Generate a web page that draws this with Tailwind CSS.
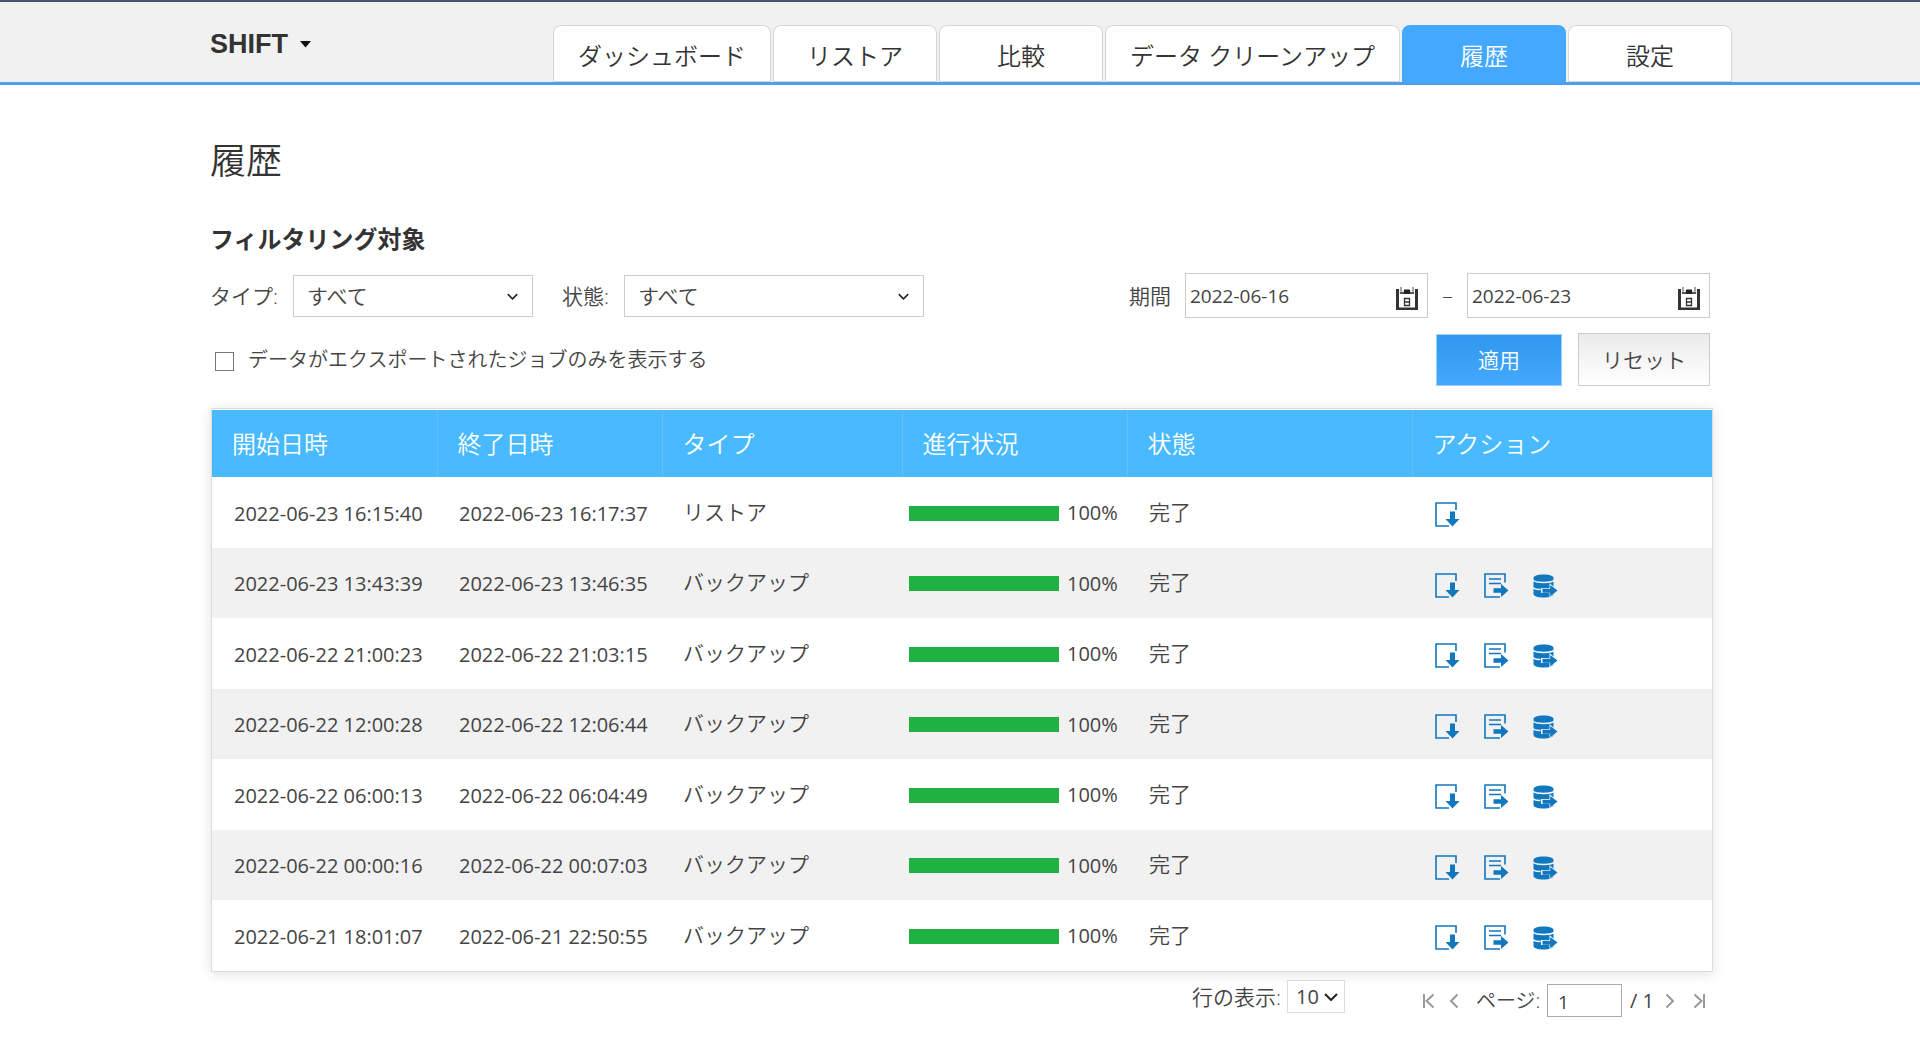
<!DOCTYPE html>
<html lang="ja">
<head>
<meta charset="utf-8">
<title>履歴</title>
<script src="https://cdn.jsdelivr.net/npm/@tailwindcss/browser@4"></script>
</head>
<body class="bg-white font-['Open_Sans','Noto_Sans_CJK_JP',sans-serif] font-[350] text-[#333]">
<svg class="absolute size-0" aria-hidden="true">
  <mask id="database-gaps" maskUnits="userSpaceOnUse" x="0" y="0" width="25" height="25">
    <path d="M0 0h25v25H0z" fill="#fff"/>
    <path d="M-1 6.500c3 4 20 4 23 0M-1 14c2 2 5 2.500 8.500 2.500" fill="none" stroke="#000" stroke-width="1.500"/>
    <path d="M8 15h8.500v-5l8.500 7.500-8.500 7.500v-5H8z" fill="#000"/>
  </mask>
  <symbol id="icon-download" viewBox="0 0 25 25">
    <path d="M21 8V1H1v23h13" fill="none" stroke="#1177bf" stroke-width="1.600"/>
    <path d="M15 9.500h5v7.500h4.500L17.500 24.500 10.500 17H15z" fill="#1177bf"/>
  </symbol>
  <symbol id="icon-report" viewBox="0 0 25 25">
    <path d="M21 9.500V1H1v23h15" fill="none" stroke="#1177bf" stroke-width="1.600"/>
    <path d="M5 6h12M5 10.500h12" stroke="#1177bf" stroke-width="1.600"/>
    <path d="M9.500 15.200H17V11l7.500 6.500L17 24v-4.200H9.500z" fill="#1177bf"/>
  </symbol>
  <symbol id="icon-database" viewBox="0 0 25 25">
    <path d="M.500 5c0-2 4-3.500 10-3.500s10 1.500 10 3.500v16c0 2-4 3.500-10 3.500S.500 23 .500 21z" fill="#1177bf" mask="url(#database-gaps)"/>
    <path d="M9.500 15.700H17.200V12l7.300 5.500-7.300 6v-3.700H9.500z" fill="#1177bf"/>
  </symbol>
  <symbol id="icon-calendar" viewBox="0 0 22 23">
    <path d="M3.500 3h15v4h-15z" fill="#e4e4e4"/>
    <path d="M0 2h3v18.500h16V2h3v21H0z" fill="#333"/>
    <path d="M8 2.500h6V7H8z" fill="#222"/>
    <path d="M4 5h4v2H4zM14 5h4v2h-4z" fill="#555"/>
    <path d="M5 0v4.500M17 0v4.500" stroke="#777" stroke-width="1.300"/>
    <path d="M8.500 11.500h5v7h-5zM8.500 15h5" fill="none" stroke="#333" stroke-width="1.300"/>
  </symbol>
  <symbol id="icon-chevron" viewBox="0 0 14 8">
    <path d="M1 1l6 6 6-6" fill="none" stroke="#222" stroke-width="2"/>
  </symbol>
</svg>

<header class="border-t-2 border-[#44566a] bg-[#f1f1f1]">
  <div class="border-b-3 border-[#4ba1ee]">
    <div class="mx-auto flex h-20 max-w-[1544px] items-end justify-between pl-[22px]">
      <button class="mb-[22px] flex items-center gap-3 font-['Liberation_Sans',sans-serif] text-[27px] leading-8 font-bold">SHIFT
        <svg class="h-[7px] w-[11px]" viewBox="0 0 11 7"><path d="M0 0h11L5.500 6.500z" fill="#111"/></svg>
      </button>
      <nav class="flex gap-0.5 text-2xl [&>a]:flex [&>a]:h-[57px] [&>a]:min-w-[164px] [&>a]:items-center [&>a]:justify-center [&>a]:rounded-t-lg [&>a]:px-[25px] [&>a]:pt-1 [&>a]:whitespace-nowrap">
        <a href="#" class="bg-white shadow-[inset_0_0_0_1px_#d6d6d6]">ダッシュボード</a>
        <a href="#" class="bg-white shadow-[inset_0_0_0_1px_#d6d6d6]">リストア</a>
        <a href="#" class="bg-white shadow-[inset_0_0_0_1px_#d6d6d6]">比較</a>
        <a href="#" class="bg-white shadow-[inset_0_0_0_1px_#d6d6d6]">データ クリーンアップ</a>
        <a href="#" aria-current="page" class="bg-[#44a8ff] text-white">履歴</a>
        <a href="#" class="bg-white shadow-[inset_0_0_0_1px_#d6d6d6]">設定</a>
      </nav>
    </div>
  </div>
</header>

<main class="mx-auto max-w-[1544px] pr-[19px] pl-[22px]">
  <h1 class="pt-[50px] text-4xl leading-[52px]">履歴</h1>
  <h2 class="mt-8 text-2xl leading-10 font-bold">フィルタリング対象</h2>

  <form class="mt-3.5 pr-[3px] text-[21px] text-[#444]" onsubmit="return false">
    <div class="flex h-[45px] items-center">
      <label for="type" class="w-[83px] pt-0.5">タイプ:</label>
      <div class="relative">
        <select id="type" class="h-[42px] w-60 appearance-none border border-[#ccc] bg-white px-[13px] pt-0.5"><option>すべて</option></select>
        <svg class="pointer-events-none absolute top-[18px] right-[15px] h-[7px] w-[11px]"><use href="#icon-chevron"/></svg>
      </div>
      <label for="status" class="ml-[29px] w-[62px] pt-0.5">状態:</label>
      <div class="relative">
        <select id="status" class="h-[42px] w-[300px] appearance-none border border-[#ccc] bg-white px-[13px] pt-0.5"><option>すべて</option></select>
        <svg class="pointer-events-none absolute top-[18px] right-[15px] h-[7px] w-[11px]"><use href="#icon-chevron"/></svg>
      </div>
      <div class="ml-auto flex items-center">
        <label for="from" class="mr-3.5 pt-0.5">期間</label>
        <div class="relative">
          <input id="from" type="text" value="2022-06-16" class="h-[45px] w-[243px] border border-[#ccc] px-1 text-[19px] font-normal">
          <svg class="pointer-events-none absolute top-3.5 right-2.5 h-[23px] w-[22px]"><use href="#icon-calendar"/></svg>
        </div>
        <span class="w-[39px] text-center">–</span>
        <div class="relative">
          <input aria-label="終了日" type="text" value="2022-06-23" class="h-[45px] w-[243px] border border-[#ccc] px-1 text-[19px] font-normal">
          <svg class="pointer-events-none absolute top-3.5 right-2.5 h-[23px] w-[22px]"><use href="#icon-calendar"/></svg>
        </div>
      </div>
    </div>
    <div class="mt-[15px] flex h-[53px] items-center">
      <input id="exported" type="checkbox" class="mt-1 ml-[5px] size-[19px] appearance-none border border-[#777] bg-white">
      <label for="exported" class="ml-3.5 text-xl">データがエクスポートされたジョブのみを表示する</label>
      <button class="ml-auto h-[52px] w-[126px] border border-[#9bd0fb] bg-linear-to-b from-[#2f98ee] to-[#44a8ff] pt-0.5 text-white">適用</button>
      <button type="reset" class="ml-4 h-[53px] w-[132px] border border-[#ccc] bg-linear-to-b from-[#ebebeb] to-white pt-0.5">リセット</button>
    </div>
  </form>

  <div class="mt-[22px] ml-px border border-[#ddd] pt-px shadow-[0_2px_12px_rgba(0,0,0,0.12)]">
    <table class="w-full table-fixed text-left">
      <colgroup><col class="w-[15%]"><col class="w-[15%]"><col class="w-[16%]"><col class="w-[15%]"><col class="w-[19%]"><col class="w-[20%]"></colgroup>
      <thead class="bg-[#49baff] text-2xl text-white">
        <tr class="h-[67px] [&>th]:border-r [&>th]:border-[#65c0fa] [&>th]:px-5 [&>th]:font-[350] [&>th:last-child]:border-r-0">
          <th>開始日時</th><th>終了日時</th><th>タイプ</th><th>進行状況</th><th>状態</th><th>アクション</th>
        </tr>
      </thead>
      <tbody id="jobs" class="text-[21px] text-[#444] [&>tr]:h-[71px] [&>tr:nth-child(even)]:h-[70px] [&>tr:nth-child(even)]:bg-[#f1f1f1]"></tbody>
    </table>
  </div>

  <div class="mt-2 flex h-[38px] items-start justify-end pr-2 text-[21px] text-[#444]">
    <label for="rows" class="mr-1.5 pt-px leading-8">行の表示:</label>
    <div class="relative">
      <select id="rows" class="h-[33px] w-[58px] appearance-none border border-[#ddd] bg-white px-2 text-xl leading-none font-normal"><option>10</option></select>
      <svg class="pointer-events-none absolute top-[13px] right-[7px] h-2 w-3.5"><use href="#icon-chevron"/></svg>
    </div>
    <div class="mt-1 ml-[78px] flex h-[33px] items-center">
      <button aria-label="最初のページ"><svg class="h-4 w-3" viewBox="0 0 12 16" fill="none" stroke="#999" stroke-width="2"><path d="M1 1v14M10.500 1.500L3.500 8l7 6.500"/></svg></button>
      <button aria-label="前のページ" class="ml-3.5"><svg class="h-4 w-2.5" viewBox="0 0 10 16" fill="none" stroke="#999" stroke-width="2"><path d="M8.500 1.500L2 8l6.500 6.500"/></svg></button>
      <label for="page" class="ml-[17px] w-[71px] text-xl">ページ:</label>
      <input id="page" type="text" value="1" class="h-[33px] w-[75px] border border-[#aaa] px-2.5 pt-0.5 text-[19px] font-normal">
      <span class="ml-2 w-[35px] text-xl font-normal">/ 1</span>
      <button aria-label="次のページ"><svg class="h-4 w-2.5" viewBox="0 0 10 16" fill="none" stroke="#999" stroke-width="2"><path d="M1.500 1.500L8 8l-6.500 6.500"/></svg></button>
      <button aria-label="最後のページ" class="ml-[18px]"><svg class="h-4 w-3" viewBox="0 0 12 16" fill="none" stroke="#999" stroke-width="2"><path d="M11 1v14M1.500 1.500L8.500 8l-7 6.500"/></svg></button>
    </div>
  </div>
</main>

<script>
  const jobs = [
    ['2022-06-23 16:15:40', '2022-06-23 16:17:37', 'リストア'],
    ['2022-06-23 13:43:39', '2022-06-23 13:46:35', 'バックアップ'],
    ['2022-06-22 21:00:23', '2022-06-22 21:03:15', 'バックアップ'],
    ['2022-06-22 12:00:28', '2022-06-22 12:06:44', 'バックアップ'],
    ['2022-06-22 06:00:13', '2022-06-22 06:04:49', 'バックアップ'],
    ['2022-06-22 00:00:16', '2022-06-22 00:07:03', 'バックアップ'],
    ['2022-06-21 18:01:07', '2022-06-21 22:50:55', 'バックアップ'],
  ];
  const action = (icon, label) =>
    `<button aria-label="${label}"><svg class="size-[25px]"><use href="#icon-${icon}"/></svg></button>`;
  document.getElementById('jobs').innerHTML = jobs.map(([start, end, type]) => `
    <tr>
      <td class="pt-0.5 pl-[22px] text-xl font-normal whitespace-nowrap">${start}</td>
      <td class="pt-0.5 pl-[22px] text-xl font-normal whitespace-nowrap">${end}</td>
      <td class="pl-[21px]">${type}</td>
      <td class="pl-[7px]"><div class="flex items-center gap-2 pt-px text-xl font-normal">
        <div class="h-[15px] w-[150px] bg-[#1fb141]"></div>100%</div></td>
      <td class="pl-[22px]">完了</td>
      <td class="pl-[23px]"><div class="flex gap-6 pt-1">
        ${action('download', 'ダウンロード')}
        ${type === 'バックアップ' ? action('report', 'レポート') + action('database', 'データのエクスポート') : ''}
      </div></td>
    </tr>`).join('');
</script>
</body>
</html>
